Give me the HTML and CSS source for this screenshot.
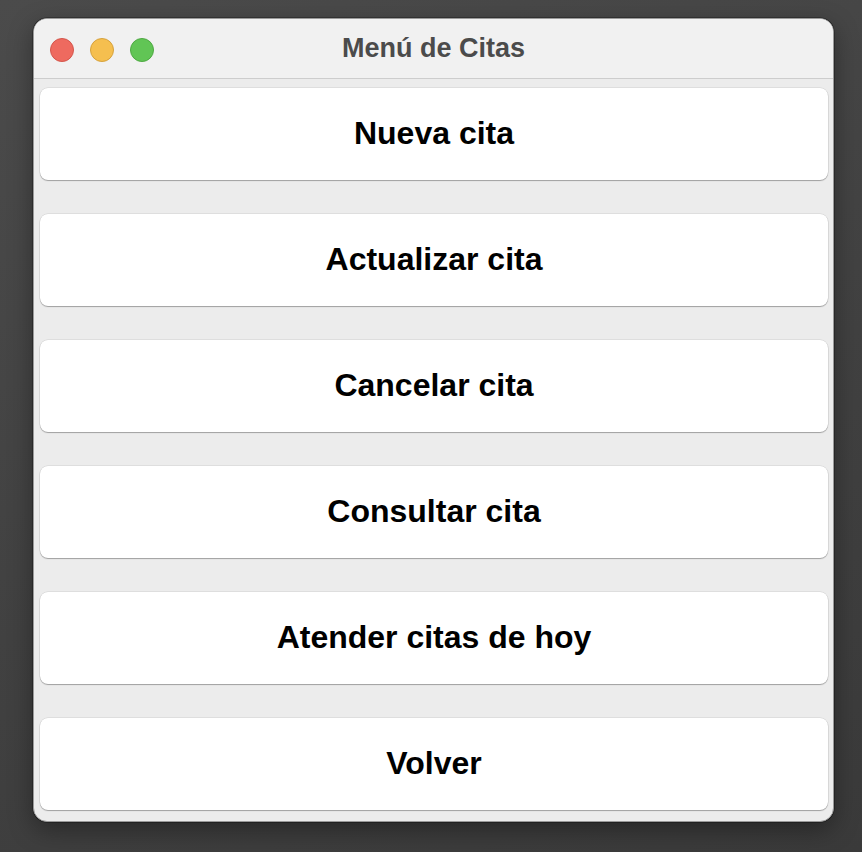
FILE: index.html
```html
<!DOCTYPE html>
<html lang="es">
<head>
<meta charset="utf-8">
<title>Menú de Citas</title>
<link rel="stylesheet" href="styles.css">
</head>
<body>
<div class="window">
  <div class="titlebar">
    <div class="lights">
      <span class="light red"></span>
      <span class="light yellow"></span>
      <span class="light green"></span>
    </div>
    <div class="title">Menú de Citas</div>
  </div>
  <div class="content">
    <button class="btn">Nueva cita</button>
    <button class="btn">Actualizar cita</button>
    <button class="btn">Cancelar cita</button>
    <button class="btn">Consultar cita</button>
    <button class="btn">Atender citas de hoy</button>
    <button class="btn">Volver</button>
  </div>
</div>
</body>
</html>
```
FILE: styles.css
```css
html, body {
  margin: 0;
  padding: 0;
}
body {
  width: 862px;
  height: 852px;
  overflow: hidden;
  background: linear-gradient(160deg, #4b4b4b 0%, #414141 55%, #3a3a3a 100%);
  font-family: "Liberation Sans", Arial, sans-serif;
}
.window {
  margin: 18px 0 0 33px;
  width: 799px;
  height: 802px;
  border: 1px solid #9a9a9a;
  border-radius: 14px;
  overflow: hidden;
  background: #ececec;
  box-shadow: 0 0 0 0.5px rgba(0,0,0,0.5), 0 8px 24px rgba(0,0,0,0.35), inset 0 1px 0 rgba(255,255,255,0.6);
  display: flex;
  flex-direction: column;
}
.titlebar {
  position: relative;
  height: 59px;
  flex: 0 0 59px;
  background: #f1f1f1;
  border-bottom: 1px solid #cdcdcd;
  display: flex;
  align-items: center;
  justify-content: center;
}
.lights {
  position: absolute;
  left: 16px;
  top: 19px;
  display: flex;
  gap: 16px;
}
.light {
  width: 22px;
  height: 22px;
  border-radius: 50%;
  border: 1px solid;
  display: block;
}
.red { background: #ee6a5f; border-color: #d4564c; }
.yellow { background: #f5bf4f; border-color: #d6a23d; }
.green { background: #61c555; border-color: #4fa943; }
.title {
  font-weight: bold;
  font-size: 27px;
  color: #4b4b4b;
  margin-top: 0;
}
.content {
  flex: 1;
  padding: 9px 5px 0 6px;
  display: flex;
  flex-direction: column;
  gap: 34px;
}
.btn {
  height: 92px;
  flex: 0 0 92px;
  background: #ffffff;
  border: none;
  border-radius: 8px;
  box-shadow: 0 1px 1px rgba(0,0,0,0.28), 0 0 0 0.5px rgba(0,0,0,0.12);
  font-family: "Liberation Sans", Arial, sans-serif;
  font-weight: bold;
  font-size: 32px;
  color: #000;
  padding: 0 0 2px 0;
  display: flex;
  align-items: center;
  justify-content: center;
}
```
